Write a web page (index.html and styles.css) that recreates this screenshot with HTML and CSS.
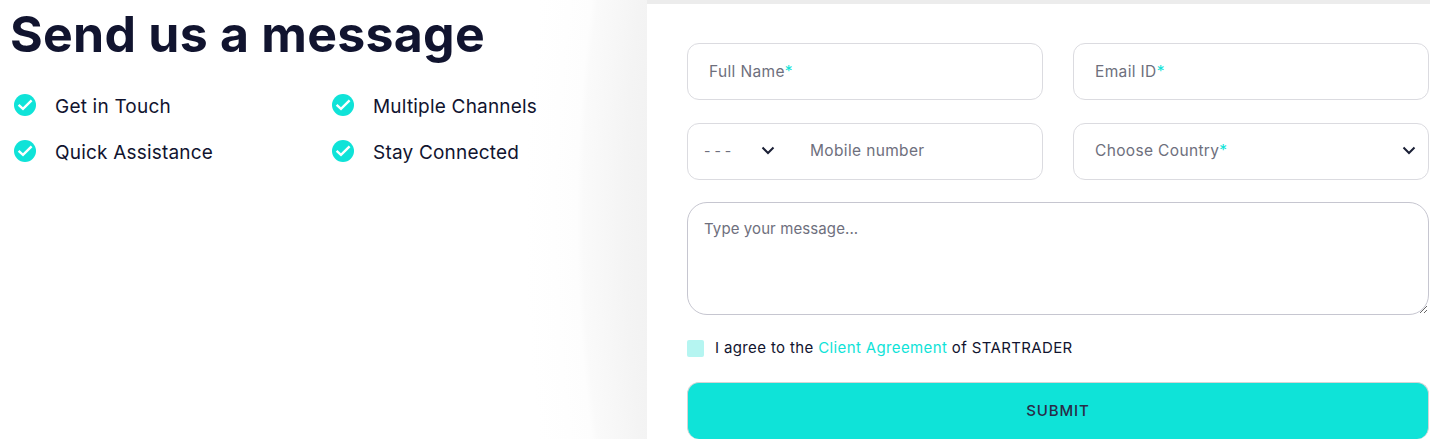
FILE: index.html
```html
<!DOCTYPE html>
<html lang="en">
<head>
<meta charset="utf-8">
<title>Send us a message</title>
<link rel="stylesheet" href="styles.css">
</head>
<body>
<main class="page">
  <section class="intro">
    <h1 class="title">Send us a message</h1>
    <ul class="points">
      <li class="point"><svg class="tick" viewBox="0 0 22 22"><circle cx="11" cy="11" r="11" fill="#0fe3d8"/><path d="M4.6 10.8l4.4 4 8.6-8.4" fill="none" stroke="#fff" stroke-width="2.4"/></svg>Get in Touch</li>
      <li class="point"><svg class="tick" viewBox="0 0 22 22"><circle cx="11" cy="11" r="11" fill="#0fe3d8"/><path d="M4.6 10.8l4.4 4 8.6-8.4" fill="none" stroke="#fff" stroke-width="2.4"/></svg>Multiple Channels</li>
      <li class="point"><svg class="tick" viewBox="0 0 22 22"><circle cx="11" cy="11" r="11" fill="#0fe3d8"/><path d="M4.6 10.8l4.4 4 8.6-8.4" fill="none" stroke="#fff" stroke-width="2.4"/></svg>Quick Assistance</li>
      <li class="point"><svg class="tick" viewBox="0 0 22 22"><circle cx="11" cy="11" r="11" fill="#0fe3d8"/><path d="M4.6 10.8l4.4 4 8.6-8.4" fill="none" stroke="#fff" stroke-width="2.4"/></svg>Stay Connected</li>
    </ul>
  </section>
  <section class="card">
    <form class="form">
      <div class="field"><span class="hint">Full Name<b class="req">*</b></span></div>
      <div class="field"><span class="hint">Email ID<b class="req">*</b></span></div>
      <div class="field phone">
        <span class="code">- - -</span>
        <svg class="chev chev-code" viewBox="0 0 14 9"><path d="M1.5 1.5L7 7l5.5-5.5" fill="none" stroke="#1b2036" stroke-width="2"/></svg>
        <span class="hint">Mobile number</span>
      </div>
      <div class="field country"><span class="hint">Choose Country<b class="req">*</b></span>
        <svg class="chev" viewBox="0 0 14 9"><path d="M1.5 1.5L7 7l5.5-5.5" fill="none" stroke="#1b2036" stroke-width="2"/></svg>
      </div>
      <textarea class="message" placeholder="Type your message..."></textarea>
      <label class="agree"><span class="box"></span><span class="agree-text">I agree to the <a class="link">Client Agreement</a> of STARTRADER</span></label>
      <button class="submit" type="button">SUBMIT</button>
    </form>
  </section>
</main>
</body>
</html>
```
FILE: styles.css
```css
* { box-sizing: border-box; }
html, body { margin: 0; height: 439px; overflow: hidden; background: #fff; }
body { font-family: Inter, "Liberation Sans", sans-serif; color: #11142f; }
.page { display: flex; height: 439px; }
.intro {
  width: 647px; flex: none; padding-left: 10px;
  background: radial-gradient(circle 1700px at 2195px 219px,
    #f2f2f2 1548px, #f4f4f4 1570px, #f7f7f7 1590px, #fafafa 1612px,
    #fdfdfd 1618px, #fefefe 1640px, #fff 1670px);
}
.title { margin: 6px 0 0; font-size: 50px; line-height: 56px; font-weight: 700; letter-spacing: .25px; color: #11142f; }
.points { list-style: none; margin: 32px 0 0 4px; padding: 0; display: grid; grid-template-columns: 318px 1fr; row-gap: 24px; }
.point { display: flex; align-items: flex-start; gap: 19px; height: 22px; font-size: 19px; line-height: 26px; letter-spacing: .2px; }
.tick { width: 22px; height: 22px; flex: none; }
.card { flex: 1; min-width: 0; background: #fff; border-top: 4px solid #ececec; padding: 39px 1px 0 40px; }
.form { display: grid; grid-template-columns: 356px 356px; column-gap: 30px; grid-template-rows: 57px 57px 113px 18px 57px; row-gap: 23px; }
.field { display: flex; align-items: center; border: 1px solid #dbdbe0; border-radius: 12px; padding: 0 21px; }
.hint { font-size: 15.5px; letter-spacing: .35px; color: #6e6f7d; }
.req { color: #0fe3d8; font-weight: 400; }
.phone { padding-left: 16px; padding-bottom: 2px; }
.code { font-size: 14px; color: #6e6f7d; width: 57px; }
.chev { width: 14px; height: 9px; flex: none; }
.chev-code { margin-right: 35px; }
.country { justify-content: space-between; padding-right: 12px; padding-bottom: 2px; }
.message {
  grid-column: 1 / -1; display: block; width: 100%; height: 113px; margin-top: -1px;
  border: 1px solid #c6c6d0; border-radius: 20px; padding: 16px; outline: none;
  font: 15px Inter, "Liberation Sans", sans-serif; letter-spacing: .1px; color: #11142f; background: #fff;
}
.message::placeholder { color: #6e6f7d; opacity: 1; }
.agree { grid-column: 1 / -1; display: flex; align-items: center; gap: 11px; font-size: 15px; letter-spacing: .37px; color: #11142f; margin-top: 1px; }
.agree-text { padding-bottom: 2px; }
.box { width: 17px; height: 17px; background: #b5f5f1; border-radius: 2px; flex: none; }
.link { color: #0fe3d8; }
.submit {
  grid-column: 1 / -1; height: 57px; margin-top: 2px; padding-bottom: 2px; border: 1px solid #d5d5d5; border-bottom: 0; border-radius: 12px; background: #0fe3d8;
  font: 500 15px Inter, "Liberation Sans", sans-serif; letter-spacing: .9px; color: #2a2c47;
}
```
